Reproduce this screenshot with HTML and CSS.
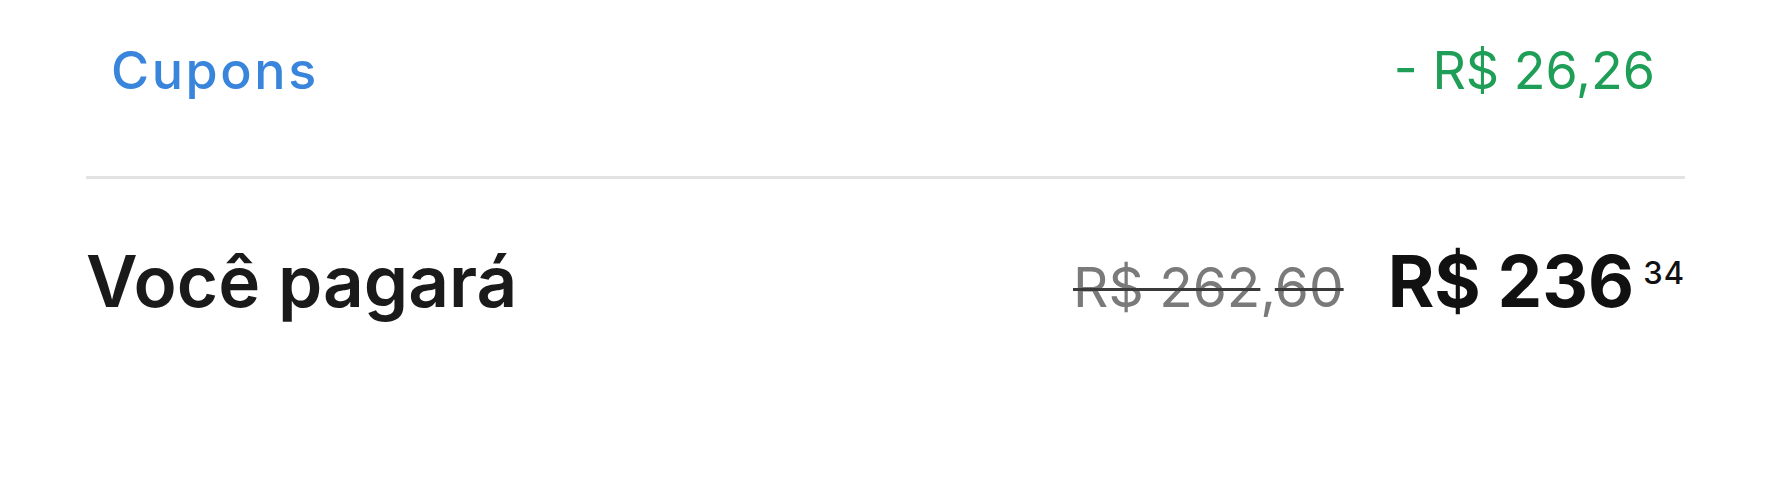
FILE: index.html
```
<!DOCTYPE html>
<html lang="pt-BR">
<head>
  <meta charset="UTF-8">
  <meta name="viewport" content="width=device-width, initial-scale=1.0">
  <title>Resumo da compra</title>
  <link rel="stylesheet" href="styles.css">
</head>
<body>
  <section class="summary">
    <div class="coupon-row">
      <span class="coupon-label">Cupons</span>
      <span class="coupon-value">- R$ 26,26</span>
    </div>

    <div class="total-row">
      <span class="total-label">Você pagará</span>
      <div class="prices">
        <span class="old-price"><s>R$ 262</s>,<s>60</s></span>
        <span class="price">R$ 236<sup>34</sup></span>
      </div>
    </div>
  </section>
</body>
</html>
```

FILE: styles.css
```
body {
  margin: 0;
  background-color: #ffffff;
  font-family: Inter, Lato, sans-serif;
  color: #1a1a1a;
}

.summary {
  padding: 0 85px 0 86px;
}

/* Coupons row */
.coupon-row {
  display: flex;
  justify-content: space-between;
  align-items: baseline;
  padding: 40px 30px 74px 25px;
  border-bottom: 3px solid #e3e3e3;
  font-size: 52px;
  line-height: 1.2;
}

.coupon-label {
  color: #3a85dc;
  font-weight: 500;
  letter-spacing: 2.6px;
}

.coupon-value {
  color: #1e9e56;
}

/* Total row */
.total-row {
  display: flex;
  justify-content: space-between;
  align-items: baseline;
  padding-top: 60px;
  line-height: 1.2;
}

.total-label {
  font-size: 71px;
  font-weight: 600;
}

.prices {
  display: flex;
  align-items: baseline;
  gap: 44px;
}

.old-price {
  font-size: 55px;
  color: #7a7a7a;
}

.old-price s {
  text-decoration-color: #3a3a3a;
  text-decoration-thickness: 3px;
}

.price {
  font-size: 71px;
  font-weight: 700;
  color: #111;
}

.price sup {
  font-size: 31px;
  font-weight: 500;
  letter-spacing: 1px;
  margin-left: 9px;
  vertical-align: 23px;
  line-height: 0;
}
```
